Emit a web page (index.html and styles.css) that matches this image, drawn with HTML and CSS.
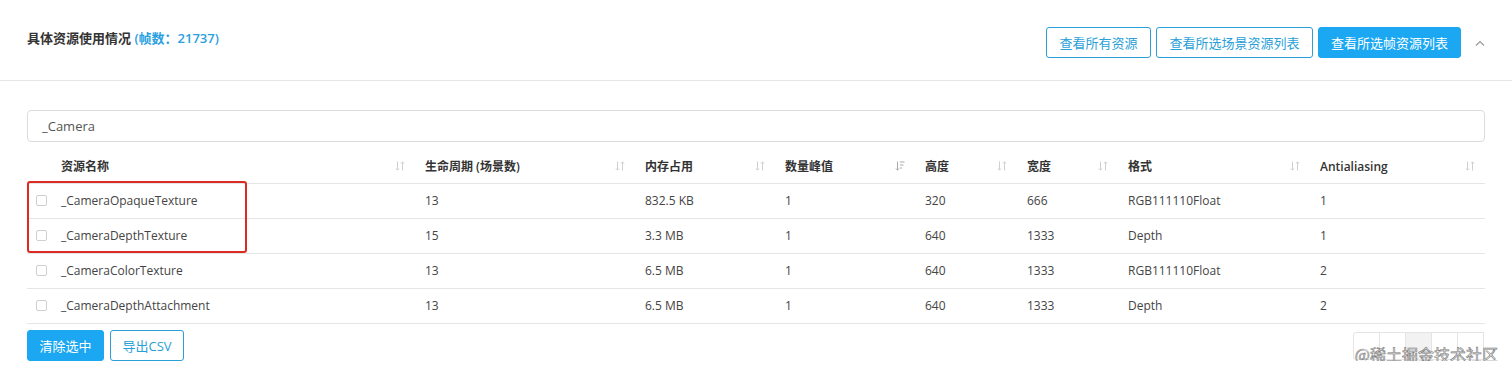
FILE: index.html
```html
<!DOCTYPE html>
<html lang="zh-CN">

<head>
    <meta charset="UTF-8">
    <title>具体资源使用情况</title>
    <link rel="stylesheet" href="styles.css">
</head>

<body>
    <div class="panel">
        <div class="panel-head">
            <div class="title">具体资源使用情况 <span class="frames">(帧数：21737)</span></div>
            <div class="actions">
                <button class="btn">查看所有资源</button>
                <button class="btn">查看所选场景资源列表</button>
                <button class="btn btn-primary">查看所选帧资源列表</button>
                <span class="fold">
                    <svg width="10" height="6" viewBox="0 0 10 6"><path d="M1 5.5L5 1.5L9 5.5" fill="none" stroke="#999" stroke-width="1.2"/></svg>
                </span>
            </div>
        </div>

        <div class="panel-body">
            <div class="search">_Camera</div>

            <div class="table-wrap">
                <table class="res-table">
                    <colgroup>
                        <col style="width:25px">
                        <col style="width:363px">
                        <col style="width:220px">
                        <col style="width:140px">
                        <col style="width:140px">
                        <col style="width:102px">
                        <col style="width:101px">
                        <col style="width:192px">
                        <col style="width:175px">
                    </colgroup>
                    <thead>
                        <tr>
                            <th></th>
                            <th><div class="th">资源名称<svg class="sort" viewBox="0 0 10 10"><path d="M2.5 0.5V9M1 7.5L2.5 9.2L4 7.5M7.5 9.5V1M6 2.5L7.5 0.8L9 2.5"/></svg></div></th>
                            <th><div class="th">生命周期 (场景数)<svg class="sort" viewBox="0 0 10 10"><path d="M2.5 0.5V9M1 7.5L2.5 9.2L4 7.5M7.5 9.5V1M6 2.5L7.5 0.8L9 2.5"/></svg></div></th>
                            <th><div class="th">内存占用<svg class="sort" viewBox="0 0 10 10"><path d="M2.5 0.5V9M1 7.5L2.5 9.2L4 7.5M7.5 9.5V1M6 2.5L7.5 0.8L9 2.5"/></svg></div></th>
                            <th><div class="th">数量峰值<svg class="sort sort-desc" viewBox="0 0 10 10"><path d="M2.5 0.5V9M1 7.5L2.5 9.2L4 7.5M5 1H9.5M5 4H8.5M5 7H7"/></svg></div></th>
                            <th><div class="th">高度<svg class="sort" viewBox="0 0 10 10"><path d="M2.5 0.5V9M1 7.5L2.5 9.2L4 7.5M7.5 9.5V1M6 2.5L7.5 0.8L9 2.5"/></svg></div></th>
                            <th><div class="th">宽度<svg class="sort" viewBox="0 0 10 10"><path d="M2.5 0.5V9M1 7.5L2.5 9.2L4 7.5M7.5 9.5V1M6 2.5L7.5 0.8L9 2.5"/></svg></div></th>
                            <th><div class="th">格式<svg class="sort" viewBox="0 0 10 10"><path d="M2.5 0.5V9M1 7.5L2.5 9.2L4 7.5M7.5 9.5V1M6 2.5L7.5 0.8L9 2.5"/></svg></div></th>
                            <th><div class="th">Antialiasing<svg class="sort" viewBox="0 0 10 10"><path d="M2.5 0.5V9M1 7.5L2.5 9.2L4 7.5M7.5 9.5V1M6 2.5L7.5 0.8L9 2.5"/></svg></div></th>
                        </tr>
                    </thead>
                    <tbody>
                        <tr>
                            <td><span class="check"></span></td>
                            <td>_CameraOpaqueTexture</td>
                            <td>13</td>
                            <td>832.5 KB</td>
                            <td>1</td>
                            <td>320</td>
                            <td>666</td>
                            <td>RGB111110Float</td>
                            <td>1</td>
                        </tr>
                        <tr>
                            <td><span class="check"></span></td>
                            <td>_CameraDepthTexture</td>
                            <td>15</td>
                            <td>3.3 MB</td>
                            <td>1</td>
                            <td>640</td>
                            <td>1333</td>
                            <td>Depth</td>
                            <td>1</td>
                        </tr>
                        <tr>
                            <td><span class="check"></span></td>
                            <td>_CameraColorTexture</td>
                            <td>13</td>
                            <td>6.5 MB</td>
                            <td>1</td>
                            <td>640</td>
                            <td>1333</td>
                            <td>RGB111110Float</td>
                            <td>2</td>
                        </tr>
                        <tr>
                            <td><span class="check"></span></td>
                            <td>_CameraDepthAttachment</td>
                            <td>13</td>
                            <td>6.5 MB</td>
                            <td>1</td>
                            <td>640</td>
                            <td>1333</td>
                            <td>Depth</td>
                            <td>2</td>
                        </tr>
                    </tbody>
                </table>
                <div class="mark"></div>
            </div>

            <div class="foot">
                <div class="foot-btns">
                    <button class="btn btn-primary btn-clear">清除选中</button>
                    <button class="btn btn-csv">导出CSV</button>
                </div>
                <div class="pager">
                    <span></span><span></span><span class="cur"></span><span></span><span></span>
                    <em class="watermark">@稀土掘金技术社区</em>
                </div>
            </div>
        </div>
    </div>
</body>

</html>
```

FILE: styles.css
```css
* {
    margin: 0;
    padding: 0;
    box-sizing: border-box;
}

body {
    background: #fff;
    font-family: "Open Sans", "Noto Sans CJK SC", sans-serif;
    font-size: 13px;
    color: #333;
}

.panel-head {
    height: 81px;
    padding: 0 27px;
    border-bottom: 1px solid #e6e6e6;
    display: flex;
    justify-content: space-between;
    align-items: flex-start;
}

.title {
    margin-top: 29px;
    font-size: 13px;
    font-weight: 600;
    line-height: 18px;
    color: #333;
}
.title .frames {
    color: #2a9fe0;
}

.actions {
    margin-top: 27px;
    display: flex;
    align-items: center;
}

.btn {
    height: 31px;
    padding: 0 12px;
    font-family: "Open Sans", "Noto Sans CJK SC", sans-serif;
    font-size: 13px;
    color: #2a9fd8;
    background: #fff;
    border: 1px solid #2a9fd8;
    border-radius: 3px;
    cursor: pointer;
}
.actions .btn {
    margin-left: 5px;
}
.actions .btn:first-child {
    margin-left: 0;
}
.actions .btn:nth-child(1) { width: 105px; }
.actions .btn:nth-child(2) { width: 157px; }
.actions .btn:nth-child(3) { width: 143px; margin-left: 5px; }

.btn-primary {
    background: #1ba7f1;
    border-color: #1ba7f1;
    color: #fff;
}

.fold {
    width: 24px;
    display: flex;
    justify-content: flex-end;
    padding-top: 1px;
}

.panel-body {
    padding: 29px 27px 0;
}

.search {
    height: 32px;
    line-height: 30px;
    padding-left: 14px;
    border: 1px solid #dcdcdc;
    border-radius: 4px;
    color: #555;
}

.table-wrap {
    position: relative;
    margin-top: 8px;
}

.res-table {
    width: 100%;
    table-layout: fixed;
    border-collapse: collapse;
}

.res-table th {
    height: 33px;
    padding: 0 10px;
    font-size: 12px;
    font-weight: 600;
    text-align: left;
    color: #333;
    border-bottom: 1px solid #e6e6e6;
}
.res-table th:nth-child(2) {
    padding-left: 9px;
}

.th {
    display: flex;
    align-items: center;
    justify-content: space-between;
}

.sort {
    width: 10px;
    height: 10px;
    fill: none;
    stroke: #cfcfcf;
    stroke-width: 1;
}
.sort-desc {
    stroke: #a9a9a9;
}

.res-table td {
    height: 35px;
    padding: 0 10px;
    font-size: 12px;
    color: #444;
    white-space: nowrap;
    border-bottom: 1px solid #e6e6e6;
}
.res-table td:first-child {
    padding: 0 0 0 9px;
}
.res-table td:nth-child(2) {
    padding-left: 9px;
}

.check {
    display: block;
    width: 11px;
    height: 11px;
    border: 1px solid #cfcfcf;
    border-radius: 2px;
    background: #fff;
}

.mark {
    position: absolute;
    left: 0;
    top: 31px;
    width: 220px;
    height: 72px;
    border: 2px solid #dc2b23;
    border-radius: 3px;
}

.foot {
    margin-top: 6px;
    display: flex;
    justify-content: space-between;
    align-items: flex-start;
}

.foot-btns {
    display: flex;
}
.btn-clear {
    width: 77px;
    padding: 0;
}
.btn-csv {
    width: 74px;
    padding: 0;
    margin-left: 6px;
}

.pager {
    position: relative;
    display: flex;
    margin-top: 2px;
    margin-right: 1px;
}
.pager span {
    width: 27px;
    height: 28px;
    border: 1px solid #e4e4e4;
    margin-left: -1px;
    background: #fff;
}
.pager span:first-child {
    border-radius: 3px 0 0 3px;
}
.pager span:last-child {
    border-radius: 0 3px 3px 0;
}
.pager .cur {
    background: #f2f2f2;
}

.watermark {
    position: absolute;
    right: -14px;
    top: 10px;
    font-style: normal;
    font-size: 16px;
    white-space: nowrap;
    color: #fff;
    -webkit-text-stroke: 0.6px #777;
    font-family: "Noto Sans CJK SC", sans-serif;
}
```
